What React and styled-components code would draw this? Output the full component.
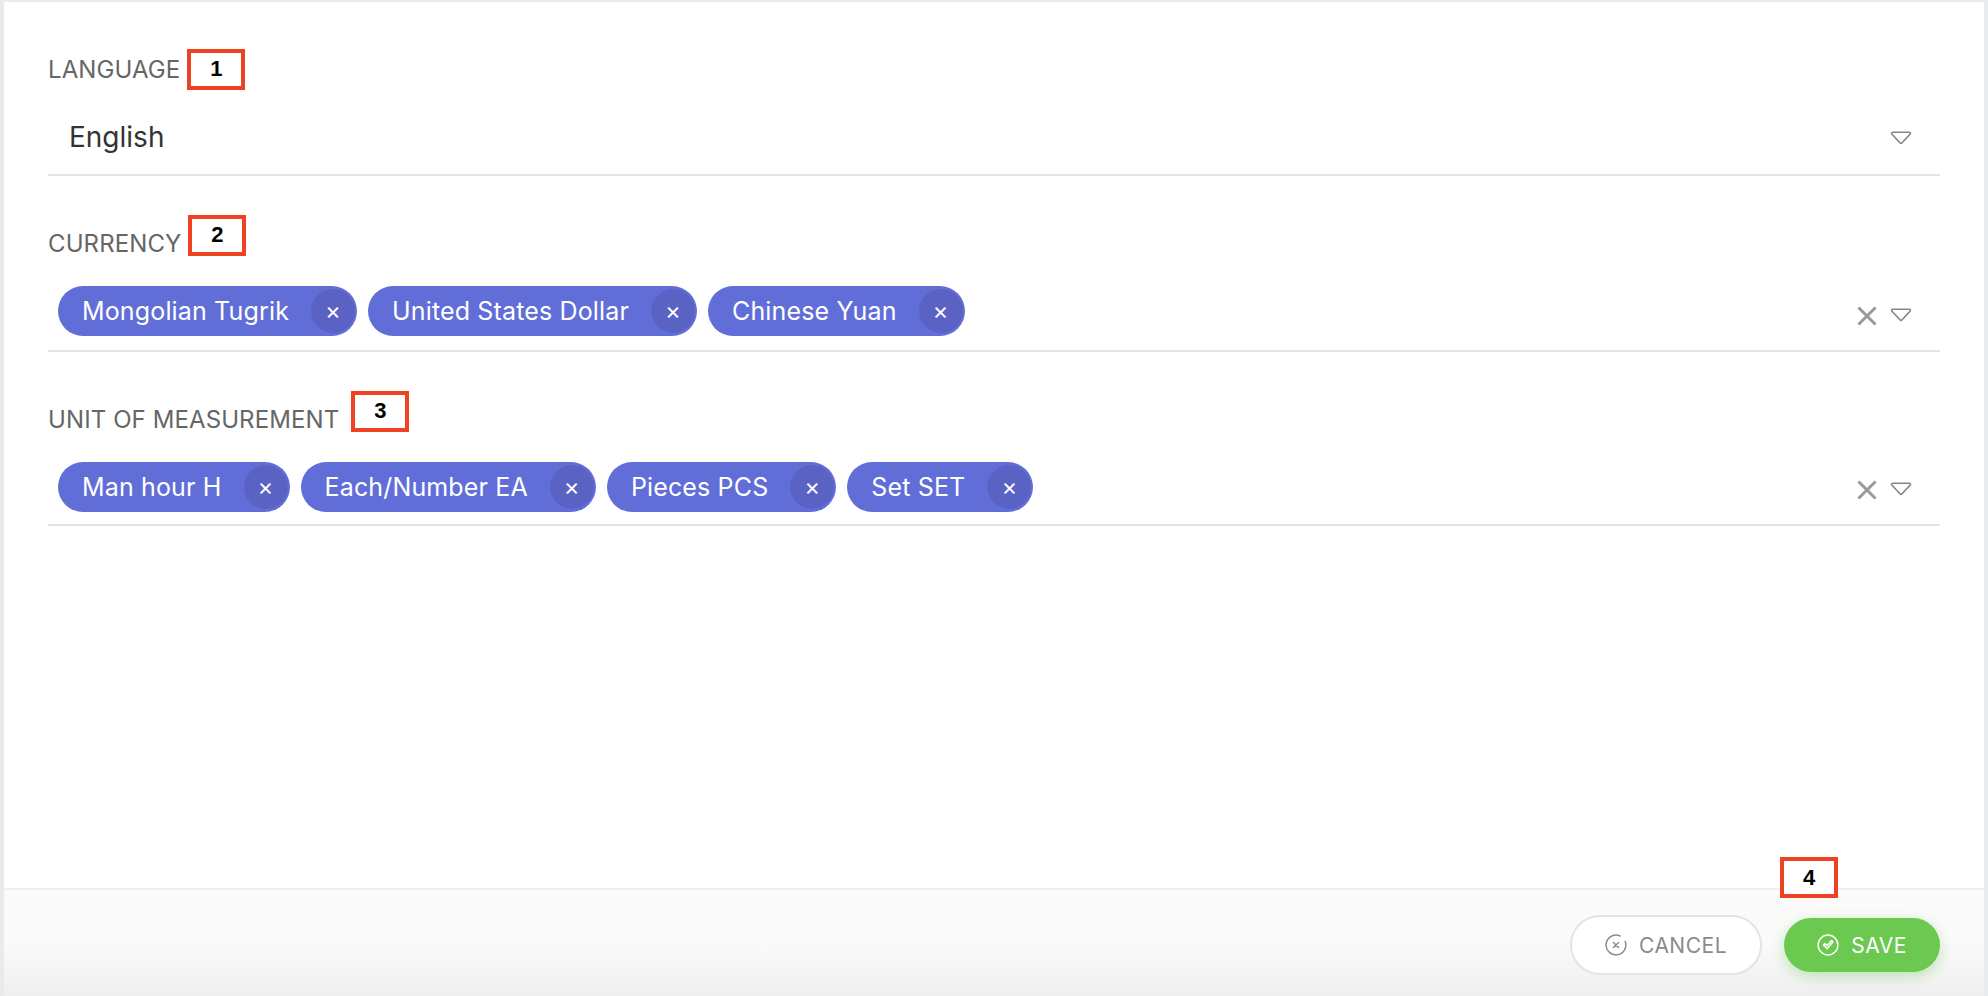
import React from "react";
import styled, { createGlobalStyle } from "styled-components";

const GlobalStyle = createGlobalStyle`
  html, body {
    margin: 0;
    height: 100%;
    background: #e8eaed;
    font-family: Inter, "Liberation Sans", sans-serif;
  }
`;

const fields = [
  { id: 1, label: "LANGUAGE", value: "English", height: 87, markerGap: 7, markerLift: 0 },
  {
    id: 2,
    label: "CURRENCY",
    tags: ["Mongolian Tugrik", "United States Dollar", "Chinese Yuan"],
    height: 89,
    markerGap: 7,
    markerLift: 16,
  },
  {
    id: 3,
    label: "UNIT OF MEASUREMENT",
    tags: ["Man hour H", "Each/Number EA", "Pieces PCS", "Set SET"],
    height: 87,
    markerGap: 12,
    markerLift: 16,
  },
];

const Chevron = () => (
  <ChevronIcon viewBox="0 0 22 14" fill="none" stroke="#858585" strokeWidth="1.6" strokeLinejoin="round">
    <path d="M3 1.2h16c1.3 0 1.9 1.1 1 2L11.8 12a1.1 1.1 0 0 1-1.6 0L2 3.2c-.9-.9-.3-2 1-2z" />
  </ChevronIcon>
);

const ClearIcon = () => (
  <ClearSvg viewBox="0 0 20 20" stroke="#9a9a9a" strokeWidth="3" strokeLinecap="square">
    <path d="M2.5 2.5l15 15M17.5 2.5l-15 15" />
  </ClearSvg>
);

const CancelIcon = () => (
  <svg width="22" height="22" viewBox="0 0 24 24" fill="none" stroke="#8b8b8b" strokeWidth="1.6" strokeLinecap="round">
    <path d="M16.5 2.2A10.8 10.8 0 1 0 22 8" />
    <path d="M9.2 9.2l5.6 5.6M14.8 9.2l-5.6 5.6" />
  </svg>
);

const SaveIcon = () => (
  <svg width="22" height="22" viewBox="0 0 24 24" fill="none" stroke="#fff" strokeWidth="1.6" strokeLinecap="round" strokeLinejoin="round">
    <circle cx="12" cy="12" r="10.8" />
    <path d="M7 12l4 4 6.5-7.5-1.6-1.4-4.9 5.6-2.4-2.2z" />
  </svg>
);

const App = () => {
  return (
    <>
      <GlobalStyle />
      <Panel>
        <Form>
          {fields.map((f) => (
            <Field key={f.id}>
              <LabelRow>
                <Label>{f.label}</Label>
                <Marker $gap={f.markerGap} $lift={f.markerLift}>
                  {f.id}
                </Marker>
              </LabelRow>
              <Control $multi={!!f.tags} $height={f.height}>
                {f.tags ? (
                  <Tags>
                    {f.tags.map((t) => (
                      <Tag key={t}>
                        {t}
                        <TagClose>×</TagClose>
                      </Tag>
                    ))}
                  </Tags>
                ) : (
                  <Value>{f.value}</Value>
                )}
                <Indicators $multi={!!f.tags}>
                  {f.tags && <ClearIcon />}
                  <Chevron />
                </Indicators>
              </Control>
            </Field>
          ))}
        </Form>
        <Footer>
          <CancelButton>
            <CancelIcon />
            CANCEL
          </CancelButton>
          <SaveWrap>
            <FooterMarker>4</FooterMarker>
            <SaveButton>
              <SaveIcon />
              SAVE
            </SaveButton>
          </SaveWrap>
        </Footer>
      </Panel>
    </>
  );
};

const Panel = styled.div`
  box-sizing: border-box;
  height: 994px;
  margin: 2px 4px 0;
  background: #fff;
  display: flex;
  flex-direction: column;
`;

const Form = styled.div`
  flex: 1;
  padding: 47px 44px 0;
`;

const Field = styled.div`
  margin-bottom: 47px;
`;

const LabelRow = styled.div`
  height: 40px;
  display: flex;
  align-items: center;
`;

const Label = styled.label`
  padding-top: 2px;
  font-size: 24px;
  line-height: 38px;
  letter-spacing: 0.1px;
  color: #666;
`;

const Marker = styled.span`
  box-sizing: border-box;
  width: 58px;
  height: 41px;
  margin-left: ${(p) => p.$gap}px;
  margin-bottom: ${(p) => p.$lift}px;
  border: 4px solid #ef4123;
  background: #fff;
  display: flex;
  align-items: center;
  justify-content: center;
  font-family: "Liberation Sans", Arial, sans-serif;
  font-weight: 700;
  font-size: 22px;
  color: #000;
`;

const Control = styled.div`
  box-sizing: border-box;
  height: ${(p) => p.$height}px;
  border-bottom: 2px solid #e1e5e8;
  display: flex;
  padding: ${(p) => (p.$multi ? "0 28px 0 10px" : "0 28px 0 21px")};
`;

const Value = styled.div`
  flex: 1;
  padding-top: 31px;
  font-size: 28px;
  line-height: 34px;
  color: #333;
`;

const Tags = styled.div`
  flex: 1;
  padding-top: 23px;
  display: flex;
  align-items: flex-start;
  gap: 11px;
`;

const Tag = styled.div`
  box-sizing: border-box;
  height: 50px;
  padding: 0 2px 0 24px;
  border-radius: 25px;
  background: #626ed8;
  color: #fff;
  font-size: 25px;
  letter-spacing: 0.15px;
  display: flex;
  align-items: center;
  gap: 22px;
`;

const TagClose = styled.span`
  width: 44px;
  height: 44px;
  border-radius: 50%;
  background: #5a62c4;
  display: flex;
  align-items: center;
  justify-content: center;
  font-size: 24px;
  line-height: 1;
`;

const Indicators = styled.div`
  align-self: flex-end;
  margin-bottom: ${(p) => (p.$multi ? "25px" : "26px")};
  height: 20px;
  display: flex;
  align-items: center;
  gap: 13px;
`;

const ChevronIcon = styled.svg`
  width: 22px;
  height: 14px;
  display: block;
`;

const ClearSvg = styled.svg`
  width: 20px;
  height: 20px;
  margin-top: 2px;
  display: block;
`;

const Footer = styled.div`
  box-sizing: border-box;
  height: 108px;
  border-top: 2px solid #efefef;
  background: linear-gradient(#fbfbfb 0%, #fafafa 50%, #efefef 100%);
  display: flex;
  align-items: center;
  justify-content: flex-end;
  gap: 22px;
  padding: 4px 44px 0 0;
`;

const buttonText = `
  box-sizing: border-box;
  font-family: Inter, "Liberation Sans", sans-serif;
  font-size: 21px;
  letter-spacing: 0.5px;
  display: flex;
  align-items: center;
  justify-content: center;
  gap: 12px;
  cursor: pointer;
`;

const CancelButton = styled.button`
  ${buttonText}
  width: 192px;
  height: 60px;
  border-radius: 30px;
  border: 2px solid #e0e5e8;
  background: #fff;
  color: #8b8b8b;
`;

const SaveWrap = styled.div`
  position: relative;
`;

const SaveButton = styled.button`
  ${buttonText}
  width: 156px;
  height: 54px;
  border-radius: 27px;
  border: 0;
  background: #6bc950;
  color: #fff;
  box-shadow: 0 4px 14px rgba(107, 201, 80, 0.4);
`;

const FooterMarker = styled(Marker)`
  position: absolute;
  left: -4px;
  top: -61px;
  margin: 0;
`;

export default App;
